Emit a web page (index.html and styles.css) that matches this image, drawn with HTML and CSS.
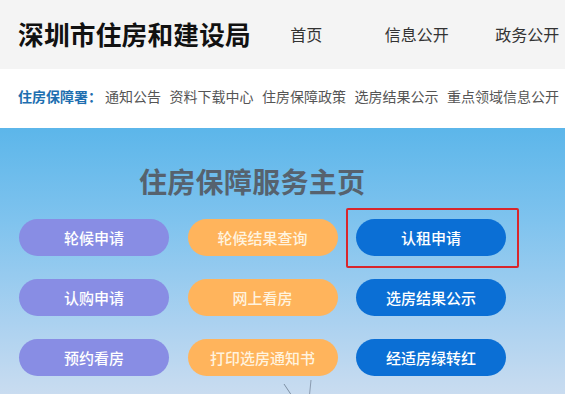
FILE: index.html
```html
<!DOCTYPE html>
<html lang="zh-CN">
<head>
<meta charset="utf-8">
<title>深圳市住房和建设局</title>
<link rel="stylesheet" href="styles.css">
</head>
<body>
<header class="top">
  <div class="logo">深圳市住房和建设局</div>
  <nav class="nav">
    <span class="nav-item">首页</span>
    <span class="nav-item">信息公开</span>
    <span class="nav-item">政务公开</span>
  </nav>
</header>
<div class="sub">
  <span class="sub-label">住房保障署：</span>
  <span class="sub-item">通知公告</span>
  <span class="sub-item">资料下载中心</span>
  <span class="sub-item">住房保障政策</span>
  <span class="sub-item">选房结果公示</span>
  <span class="sub-item">重点领域信息公开</span>
</div>
<main class="hero">
  <h1 class="hero-title">住房保障服务主页</h1>
  <div class="grid">
    <a class="btn purple">轮候申请</a>
    <a class="btn orange">轮候结果查询</a>
    <a class="btn blue marked">认租申请<span class="mark"></span></a>
    <a class="btn purple">认购申请</a>
    <a class="btn orange">网上看房</a>
    <a class="btn blue">选房结果公示</a>
    <a class="btn purple">预约看房</a>
    <a class="btn orange">打印选房通知书</a>
    <a class="btn blue">经适房绿转红</a>
  </div>
  <svg class="deco" width="80" height="20" viewBox="0 0 80 20">
    <path d="M22 4 L30 16" stroke="#7d8fa3" stroke-width="1" fill="none"/>
    <path d="M49 0 L47 20" stroke="#8a9bb0" stroke-width="1" fill="none"/>
  </svg>
</main>
</body>
</html>
```
FILE: styles.css
```css
* { box-sizing: border-box; margin: 0; padding: 0; }
html, body { width: 565px; height: 394px; overflow: hidden; }
body {
  font-family: "Noto Sans CJK SC", "Noto Sans", sans-serif;
  background: #fff;
}
.top {
  height: 69px;
  background: #f4f4f4;
  display: flex;
  align-items: center;
  white-space: nowrap;
  overflow: hidden;
}
.logo {
  padding-left: 18px;
  width: 259px;
  font-size: 25.7px;
  font-weight: 700;
  color: #111;
  letter-spacing: 0.2px;
  line-height: 1;
  margin-top: -2px;
}
.nav { display: flex; }
.nav-item {
  width: 110.5px;
  flex: none;
  text-align: center;
  font-size: 16px;
  color: #333;
  margin-top: -2px;
}
.sub {
  height: 59px;
  display: flex;
  align-items: center;
  padding-left: 18px;
  padding-bottom: 5px;
  gap: 8.5px;
  white-space: nowrap;
  overflow: hidden;
  font-size: 14px;
  color: #555;
}
.sub-label {
  color: #1e6fb0;
  font-weight: 700;
  margin-right: -5.5px;
}
.hero {
  position: relative;
  height: 266px;
  background: linear-gradient(180deg, #5cb6ea 0%, #7fc3ee 35%, #add2f0 75%, #c9dcf0 100%);
  padding-top: 34px;
}
.hero-title {
  padding-left: 139px;
  font-size: 28px;
  font-weight: 700;
  color: #56626e;
  line-height: 38px;
  letter-spacing: 0.3px;
}
.grid {
  margin-top: 19px;
  padding-left: 19px;
  display: grid;
  grid-template-columns: repeat(3, 150px);
  column-gap: 18.5px;
  row-gap: 23px;
}
.btn {
  position: relative;
  height: 37px;
  border-radius: 19px;
  display: flex;
  align-items: center;
  justify-content: center;
  color: #fff;
  font-size: 15px;
  font-weight: 500;
}
.purple { background: #888de4; }
.orange { background: #ffb45c; color: #fff3df; }
.blue { background: #0b6fd5; }
.mark {
  position: absolute;
  left: -10px;
  top: -11px;
  right: -13px;
  bottom: -12px;
  border: 2.5px solid #d8262c;
  border-radius: 2px;
}
.deco {
  position: absolute;
  left: 262px;
  top: 252px;
}
```
